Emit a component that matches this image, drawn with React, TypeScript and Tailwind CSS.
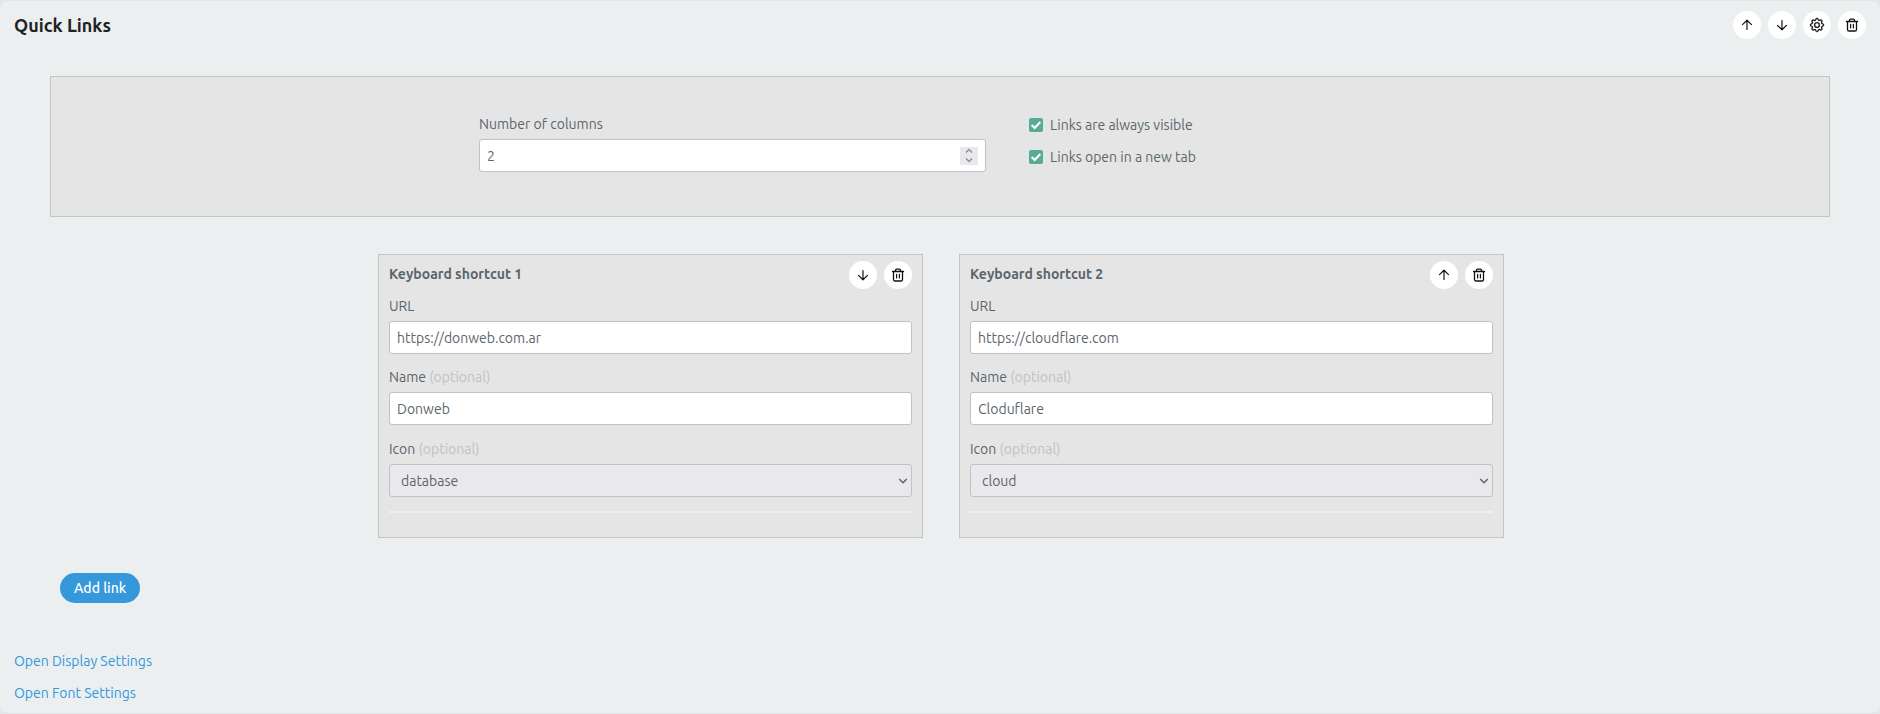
import React from 'react';
import { BsGear } from 'react-icons/bs';

interface Shortcut {
  url: string;
  name: string;
  icon: string;
}

const ICONS = ['bookmark', 'cloud', 'database', 'envelope', 'globe', 'home', 'server'];

const ArrowUp = () => (
  <svg className="size-3.5" viewBox="0 0 14 14" fill="none" stroke="currentColor" strokeWidth="1.2" strokeLinecap="round" strokeLinejoin="round">
    <path d="M7 11.500V2.500M2.500 6.600 7 2.200l4.500 4.400" />
  </svg>
);

const ArrowDown = () => (
  <svg className="size-3.5" viewBox="0 0 14 14" fill="none" stroke="currentColor" strokeWidth="1.2" strokeLinecap="round" strokeLinejoin="round">
    <path d="M7 2.500v9M2.500 7.400 7 11.800l4.500-4.400" />
  </svg>
);

const Trash = () => (
  <svg className="size-3.5" viewBox="0 0 14 14" fill="none" stroke="currentColor" strokeWidth="1.3" strokeLinecap="round" strokeLinejoin="round">
    <path d="M1.500 3.500h11M4.500 3.300V2.300Q4.500 1.100 5.700 1.100h2.600Q9.500 1.100 9.500 2.300v1" />
    <path d="M2.500 3.700v7.700Q2.500 13 4.100 13h5.800Q11.500 13 11.500 11.400V3.700" />
    <path d="M5.600 6.300v3.600M8.400 6.300v3.600" strokeWidth="1.200" />
  </svg>
);

const RoundButton: React.FC<{ label: string; onClick?: () => void; children: React.ReactNode }> = ({ label, onClick, children }) => (
  <button
    type="button"
    aria-label={label}
    title={label}
    onClick={onClick}
    className="flex size-7 items-center justify-center rounded-full bg-white text-[#111111]"
  >
    {children}
  </button>
);

const Checkbox: React.FC<{ id: string; label: string }> = ({ id, label }) => (
  <div className="flex h-8 items-center gap-[7px]">
    <span className="relative size-3.5">
      <input
        id={id}
        type="checkbox"
        defaultChecked
        className="peer block size-3.5 appearance-none rounded-[2px] border border-gray-400 bg-white checked:border-[#5aaa98] checked:bg-[#5aaa98]"
      />
      <svg className="pointer-events-none absolute inset-0 hidden text-white peer-checked:block" viewBox="0 0 14 14" fill="none" stroke="currentColor" strokeWidth="2">
        <path d="m2.700 7 3 3 5.600-6" />
      </svg>
    </span>
    <label htmlFor={id}>{label}</label>
  </div>
);

const fieldClass = 'block h-[33px] w-full rounded-[3px] border border-[#bdc3c7] bg-white px-[7px]';

const ShortcutCard: React.FC<{
  index: number;
  total: number;
  shortcut: Shortcut;
  onChange: (patch: Partial<Shortcut>) => void;
  onMove: (step: number) => void;
  onDelete: () => void;
}> = ({ index, total, shortcut, onChange, onMove, onDelete }) => {
  const icons = ICONS.includes(shortcut.icon) ? ICONS : [shortcut.icon, ...ICONS];

  return (
    <section className="border border-[#c5c5c8] bg-[#e5e5e5] px-2.5 pt-1.5 pb-6">
      <div className="flex items-start justify-between">
        <h3 className="pt-px font-bold">Keyboard shortcut {index + 1}</h3>
        <div className="flex gap-[7px]">
          {index > 0 && (
            <RoundButton label="Move up" onClick={() => onMove(-1)}><ArrowUp /></RoundButton>
          )}
          {index < total - 1 && (
            <RoundButton label="Move down" onClick={() => onMove(1)}><ArrowDown /></RoundButton>
          )}
          <RoundButton label="Delete" onClick={onDelete}><Trash /></RoundButton>
        </div>
      </div>

      <div className="mt-[5px]">
        <label htmlFor={`url_${index}`} className="mb-[3px] block">URL</label>
        <input
          id={`url_${index}`}
          type="text"
          value={shortcut.url}
          onChange={e => onChange({ url: e.target.value })}
          className={fieldClass}
        />
      </div>

      <div className="mt-[11px]">
        <label htmlFor={`name_${index}`} className="mb-[3px] block">
          Name <span className="text-[#bdc3c7]">(optional)</span>
        </label>
        <input
          id={`name_${index}`}
          type="text"
          value={shortcut.name}
          onChange={e => onChange({ name: e.target.value })}
          className={fieldClass}
        />
      </div>

      <div className="mt-3">
        <label htmlFor={`icon_${index}`} className="mb-[3px] block">
          Icon <span className="text-[#bdc3c7]">(optional)</span>
        </label>
        <div className="relative">
          <select
            id={`icon_${index}`}
            value={shortcut.icon}
            onChange={e => onChange({ icon: e.target.value })}
            className="block h-[33px] w-full appearance-none rounded-[3px] border border-[#bdc3c7] bg-[#e9e9ed] px-[11px]"
          >
            {icons.map(icon => (
              <option key={icon} value={icon}>{icon}</option>
            ))}
          </select>
          <svg className="pointer-events-none absolute top-3 right-1 size-2.5" viewBox="0 0 10 10" fill="none" stroke="currentColor" strokeWidth="1.500">
            <path d="m1.200 3 3.800 3.800L8.800 3" />
          </svg>
        </div>
      </div>

      <hr className="mt-3.5 border-t-2 border-[#ecf0f1]" />
    </section>
  );
};

export default function App() {
  const [columns, setColumns] = React.useState(2);
  const [shortcuts, setShortcuts] = React.useState<Shortcut[]>([
    { url: 'https://donweb.com.ar', name: 'Donweb', icon: 'database' },
    { url: 'https://cloudflare.com', name: 'Cloduflare', icon: 'cloud' }
  ]);

  const updateShortcut = (index: number, patch: Partial<Shortcut>) => {
    setShortcuts(prev => prev.map((item, i) => (i === index ? { ...item, ...patch } : item)));
  };

  const moveShortcut = (index: number, step: number) => {
    setShortcuts(prev => {
      const next = [...prev];
      [next[index], next[index + step]] = [next[index + step], next[index]];
      return next;
    });
  };

  return (
    <div className="min-h-screen bg-[#e2e6e6] pt-px font-['Ubuntu','Noto_Sans',sans-serif] text-sm leading-6 text-[#5b656c]">
      <main className="rounded-lg bg-[#ebeff0] px-3.5 pt-2.5 pb-1">
        <header className="flex items-start justify-between">
          <h2 className="pt-0.5 text-lg leading-6 font-bold text-[#1f2223]">Quick Links</h2>
          <div className="flex gap-[7px]">
            <RoundButton label="Move up"><ArrowUp /></RoundButton>
            <RoundButton label="Move down"><ArrowDown /></RoundButton>
            <RoundButton label="Settings"><BsGear className="size-3.5 overflow-visible" strokeWidth="0.5" /></RoundButton>
            <RoundButton label="Delete"><Trash /></RoundButton>
          </div>
        </header>

        <div className="mt-[37px] px-9">
          <div className="border border-[#c5c5c8] bg-[#e5e5e5] pt-8 pb-[43px]">
            <div className="mx-auto grid max-w-[922px] grid-cols-[15fr_11fr] gap-[43px]">
              <div className="pt-[3px]">
                <label htmlFor="columns" className="mb-[3px] block">Number of columns</label>
                <div className="flex h-[33px] items-center rounded-[3px] border border-[#bdc3c7] bg-white pr-[7px]">
                  <input
                    id="columns"
                    type="number"
                    min={1}
                    value={columns}
                    onChange={e => setColumns(Number(e.target.value))}
                    className="h-full min-w-0 flex-1 appearance-none px-[7px] outline-none [appearance:textfield]"
                  />
                  <div className="flex h-[18px] w-[18px] flex-col bg-[#e9e9ed] text-[#8f8f9d]">
                    <button type="button" aria-label="Increase" onClick={() => setColumns(columns + 1)} className="flex h-[9px] items-center justify-center">
                      <svg className="h-1.5 w-2" viewBox="0 0 8 6" fill="none" stroke="currentColor" strokeWidth="1.500">
                        <path d="m1 4.500 3-3 3 3" />
                      </svg>
                    </button>
                    <button type="button" aria-label="Decrease" onClick={() => setColumns(Math.max(1, columns - 1))} className="flex h-[9px] items-center justify-center">
                      <svg className="h-1.5 w-2" viewBox="0 0 8 6" fill="none" stroke="currentColor" strokeWidth="1.500">
                        <path d="m1 1.500 3 3 3-3" />
                      </svg>
                    </button>
                  </div>
                </div>
              </div>
              <div>
                <Checkbox id="always_visible" label="Links are always visible" />
                <Checkbox id="new_tab" label="Links open in a new tab" />
              </div>
            </div>
          </div>

          <div className="mx-auto mt-[37px] grid max-w-[1128px] grid-cols-2 gap-9 pl-0.5">
            {shortcuts.map((shortcut, i) => (
              <ShortcutCard
                key={i}
                index={i}
                total={shortcuts.length}
                shortcut={shortcut}
                onChange={patch => updateShortcut(i, patch)}
                onMove={step => moveShortcut(i, step)}
                onDelete={() => setShortcuts(prev => prev.filter((_, n) => n !== i))}
              />
            ))}
          </div>

          <button
            type="button"
            onClick={() => setShortcuts(prev => [...prev, { url: '', name: '', icon: 'bookmark' }])}
            className="mt-[35px] ml-2.5 h-[30px] rounded-full bg-[#3498db] px-3.5 font-medium text-white"
          >
            Add link
          </button>
        </div>

        <nav className="mt-[42px] flex flex-col items-start text-[#3498db]">
          <a href="#display" className="leading-8">Open Display Settings</a>
          <a href="#font" className="leading-8">Open Font Settings</a>
        </nav>
      </main>
    </div>
  );
}
